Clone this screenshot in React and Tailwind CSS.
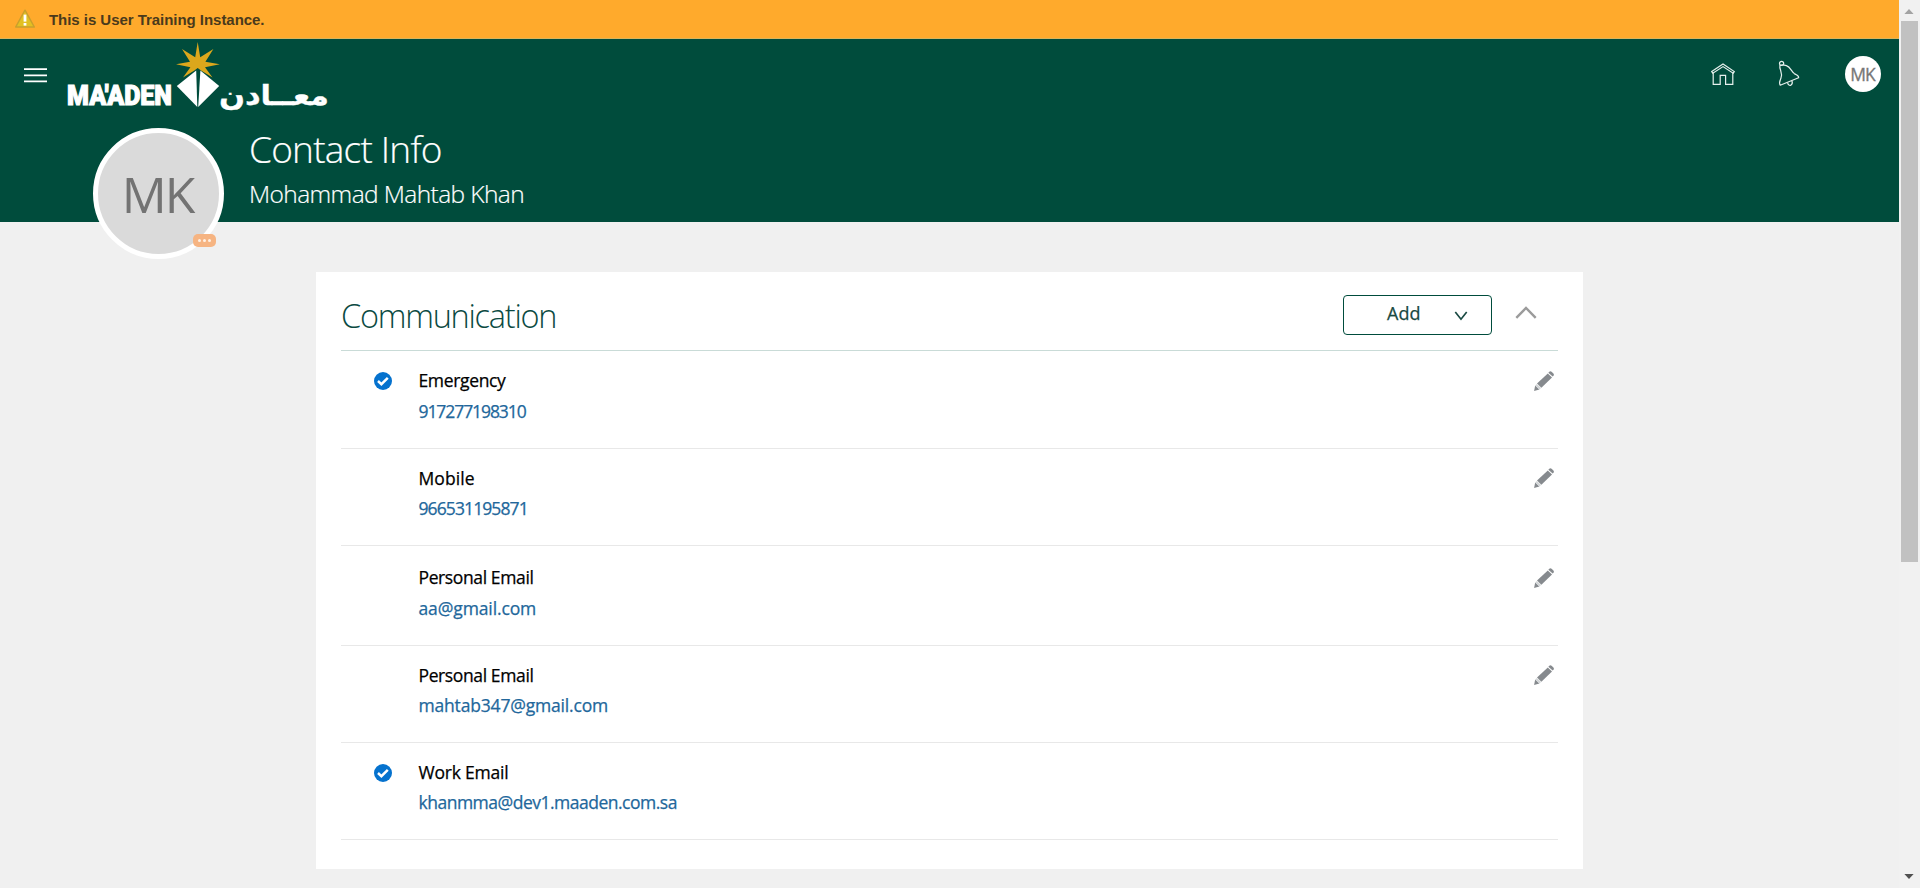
const contacts = [
  { label: 'Emergency', value: '917277198310', primary: true, editable: true, row: 'h-[98px] pt-[14px]', gap: 'mt-px', icon: 'pt-[6px]', ls: 'tracking-[-0.35px]', vs: 'tracking-[-1.08px]' },
  { label: 'Mobile', value: '966531195871', editable: true, row: 'h-[97px] pt-[14px]', gap: '', icon: 'pt-[5px]', ls: 'tracking-[0.08px]', vs: 'tracking-[-0.9px]' },
  { label: 'Personal Email', value: 'aa@gmail.com', editable: true, row: 'h-[100px] pt-[16px]', gap: 'mt-px', icon: 'pt-[6px]', ls: 'tracking-[-0.38px]', vs: 'tracking-[-0.12px]' },
  { label: 'Personal Email', value: 'mahtab347@gmail.com', editable: true, row: 'h-[97px] pt-[14px]', gap: '', icon: 'pt-[5px]', ls: 'tracking-[-0.38px]', vs: 'tracking-[-0.18px]' },
  { label: 'Work Email', value: 'khanmma@dev1.maaden.com.sa', primary: true, row: 'h-[97px] pt-[14px]', gap: '', icon: 'pt-[6px]', ls: 'tracking-[-0.22px]', vs: 'tracking-[-0.5px]' },
];

function WarningIcon() {
  return (
    <svg className="h-[20px] w-[22px] shrink-0" viewBox="0 0 22 20">
      <path d="M11 1.2 L20.3 18 H1.7 Z" fill="#e2c023" stroke="#c9a02c" strokeWidth="1.5" strokeLinejoin="round" />
      <path d="M11 5.6 V12.6" stroke="#fff" strokeWidth="2.8" />
      <rect x="9.6" y="14" width="2.8" height="2.6" fill="#fff" />
    </svg>
  );
}

function Logo() {
  return (
    <svg className="h-[82px] w-[275px] shrink-0" viewBox="60 40 275 82">
      <text x="0" y="0" transform="translate(67 105) scale(0.833 1)" fill="#fff" stroke="#fff" strokeWidth="1.1" fontFamily="Roboto, sans-serif" fontWeight="900" fontSize="27" textLength="126" lengthAdjust="spacingAndGlyphs">MA'ADEN</text>
      <path d="M197.7 42 L200.2 57.2 L213.4 49 L205.4 61.8 L219.8 64.3 L205 67.2 L212.5 77.5 L201 70.5 L197.7 68 L194.4 70.5 L183 77.5 L190.4 67.2 L176 64.3 L190 61.8 L182 49 L195.2 57.2 Z" fill="#dca71c" />
      <path d="M196.2 70.5 L176.8 86 L197.3 107 Z" fill="#fff" />
      <path d="M200.4 70.5 L219.2 86 L198.2 107 Z" fill="#fff" />
      <text direction="rtl" x="0" y="0" transform="translate(329 104.5) scale(1.09 1)" fill="#fff" stroke="#fff" strokeWidth="0.3" fontFamily="'DejaVu Sans', sans-serif" fontWeight="700" fontSize="28">معــادن</text>
    </svg>
  );
}

function HomeIcon() {
  return (
    <svg className="h-[24px] w-[26px]" viewBox="0 0 26 24" fill="none" stroke="#e6f0ed" strokeWidth="1.2">
      <path d="M1.7 9.6 L13 2 L24.3 9.6 L23.2 11.2 L13 4.6 L2.8 11.2 Z" />
      <path d="M3.2 11 V22.3 H10.2 V13.4 H15.6 V22.3 H22.8 V11" />
    </svg>
  );
}

function BellIcon() {
  return (
    <svg className="h-[28px] w-[24px]" viewBox="0 0 24 28" fill="none" stroke="#e6f0ed" strokeWidth="1.2" strokeLinejoin="round">
      <circle cx="4.6" cy="3.4" r="2.1" />
      <path d="M2.9 5.3 C2 9.5 6.2 12.5 3.9 18.3 C3.2 20.3 1.6 22.6 3.2 25.2 L21.6 17.8 C22.2 15.4 19.6 15.2 17.2 13.4 C14.2 11 13.4 7 9.4 5.6 C6.8 4.8 4.6 4.6 2.9 5.3 Z" />
      <path d="M10.6 22.6 C10.9 25.2 12.8 25.8 14.1 24.9 C15.4 24 15.6 22.4 14.8 20.8" />
    </svg>
  );
}

function CheckIcon() {
  return (
    <svg className="h-[18px] w-[18px]" viewBox="0 0 18 18">
      <circle cx="9" cy="9" r="9" fill="#0572ce" />
      <path d="M4 9 L7.4 12.2 L13.8 5.8" fill="none" stroke="#fff" strokeWidth="2.5" />
    </svg>
  );
}

function PencilIcon() {
  return (
    <svg className="h-[20px] w-[20px]" viewBox="0 0 20 20" fill="#868a8e">
      <path d="M14.9 1.2 Q16.2 -0.4 17.6 0.8 L19.4 2.6 Q20.5 3.8 19.2 5 L18.7 5.5 L14.3 1.8 Z" />
      <path d="M13.8 2.4 L18 6.4 L7.4 16.8 L3 12.6 Z" />
      <path d="M1.2 14.6 L5.4 18.6 L0.1 20 Z" />
      <path d="M2.8 12.9 L7.1 17 L5.4 18.6 L1.2 14.6 Z" fill="#d3d6d8" />
    </svg>
  );
}

function ContactRow({ item }) {
  return (
    <div className={`flex border-b border-[#e8e8e8] ${item.row}`}>
      <div className="w-[77.5px] shrink-0 pl-[33px] pt-[7px]">{item.primary && <CheckIcon />}</div>
      <div className="flex grow flex-col text-[17.5px] leading-[30px] [-webkit-text-stroke:0.25px]">
        <div className={`whitespace-nowrap text-black ${item.ls}`}>{item.label}</div>
        <a className={`whitespace-nowrap text-[#22679b] ${item.gap} ${item.vs}`}>{item.value}</a>
      </div>
      <div className={`shrink-0 pr-[4px] ${item.icon}`}>{item.editable && <PencilIcon />}</div>
    </div>
  );
}

export default function App() {
  return (
    <div className="flex h-[888px] w-[1920px] overflow-hidden bg-[#f0f0f0] font-['Open_Sans','Noto_Sans',sans-serif]">
      <div className="flex w-[1899px] flex-col">
        <div className="flex h-[39px] shrink-0 items-center border-b border-[#d9b45c] bg-[#ffaa2c] pl-[14px]">
          <WarningIcon />
          <span className="ml-[13px] pt-px font-['Liberation_Sans',sans-serif] text-[15px] leading-[20px] font-bold tracking-[-0.04px] whitespace-nowrap text-[#4a3a1c]">This is User Training Instance.</span>
        </div>

        <header className="flex h-[183px] shrink-0 flex-col bg-[#004c3c]">
          <div className="flex h-[89px] shrink-0 items-start pr-[18px] pl-[24px]">
            <svg className="mt-[28px] h-[16px] w-[23px] shrink-0" viewBox="0 0 23 16" stroke="#fff" strokeWidth="1.8">
              <path d="M0 2.1 H23 M0 8.3 H23 M0 14.4 H23" />
            </svg>
            <div className="mt-px ml-[13px]"><Logo /></div>
            <div className="ml-auto flex items-start">
              <div className="mt-[23px]"><HomeIcon /></div>
              <div className="mt-[21px] ml-[41px]"><BellIcon /></div>
              <div className="mt-[17px] ml-[44px] flex h-[36px] w-[36px] items-center justify-center rounded-full bg-white pr-px text-[17.5px] leading-[24px] tracking-[-0.9px] text-[#777] [-webkit-text-stroke:0.3px]">MK</div>
            </div>
          </div>
          <div className="flex items-start pl-[93px]">
            <div className="relative h-[131px] w-[131px] shrink-0 rounded-full border-[5px] border-white bg-[#dadada]">
              <div className="pt-[27px] pr-[2px] text-center text-[50px] leading-[68px] tracking-[-2px] text-[#737373]">MK</div>
              <div className="absolute top-[101px] left-[95px] flex h-[13px] w-[23px] items-center justify-center gap-[2px] rounded-[5px] bg-[#f6b482]">
                <i className="h-[3px] w-[3px] rounded-full bg-[#fff1e4]" />
                <i className="h-[3px] w-[3px] rounded-full bg-[#fff1e4]" />
                <i className="h-[3px] w-[3px] rounded-full bg-[#fff1e4]" />
              </div>
            </div>
            <div className="ml-[25px] whitespace-nowrap text-white">
              <h1 className="-mt-px text-[37px] leading-[44px] font-light tracking-[-0.78px] [-webkit-text-stroke:0.2px]">Contact Info</h1>
              <div className="mt-[6px] text-[24.5px] leading-[34px] font-light tracking-[-0.6px] [-webkit-text-stroke:0.2px]">Mohammad Mahtab Khan</div>
            </div>
          </div>
        </header>

        <main className="mt-[50px] ml-[316px] h-[597px] w-[1267px] shrink-0 bg-white px-[25px]">
          <div className="flex h-[79px] items-start border-b border-[#c9dbd7]">
            <h2 className="mt-[22px] text-[32.5px] leading-[44px] font-light tracking-[-1.25px] text-[#0b4a42]">Communication</h2>
            <button className="mt-[23px] ml-auto flex h-[40px] w-[149px] items-start rounded-[4px] border border-[#004c3c] pl-[43px] text-[#1a4a43]">
              <span className="mt-px text-[18px] leading-[32px] [-webkit-text-stroke:0.25px]">Add</span>
              <svg className="mt-[15px] ml-[34px] h-[10px] w-[14px]" viewBox="0 0 14 10" fill="none" stroke="currentColor" strokeWidth="1.7">
                <path d="M1.3 1 L7 8.2 L12.7 1" />
              </svg>
            </button>
            <svg className="mt-[34px] mr-[21px] ml-[23px] h-[13px] w-[22px]" viewBox="0 0 22 13" fill="none" stroke="#9b9b9b" strokeWidth="2.4">
              <path d="M1.3 11.8 L11 2 L20.7 11.8" />
            </svg>
          </div>
          {contacts.map((item) => (
            <ContactRow key={item.value} item={item} />
          ))}
        </main>
      </div>

      <div className="flex w-[21px] flex-col items-center bg-[#f1f1f1]">
        <svg className="h-[21px] w-[17px] shrink-0" viewBox="0 0 17 21"><path d="M8 9 L12.6 14 H3.4 Z" fill="#a3a3a3" /></svg>
        <div className="h-[541px] w-[17px] bg-[#c1c1c1]" />
        <svg className="mt-auto h-[21px] w-[17px] shrink-0" viewBox="0 0 17 21"><path d="M3.4 7 H12.6 L8 12 Z" fill="#505050" /></svg>
      </div>
    </div>
  );
}
